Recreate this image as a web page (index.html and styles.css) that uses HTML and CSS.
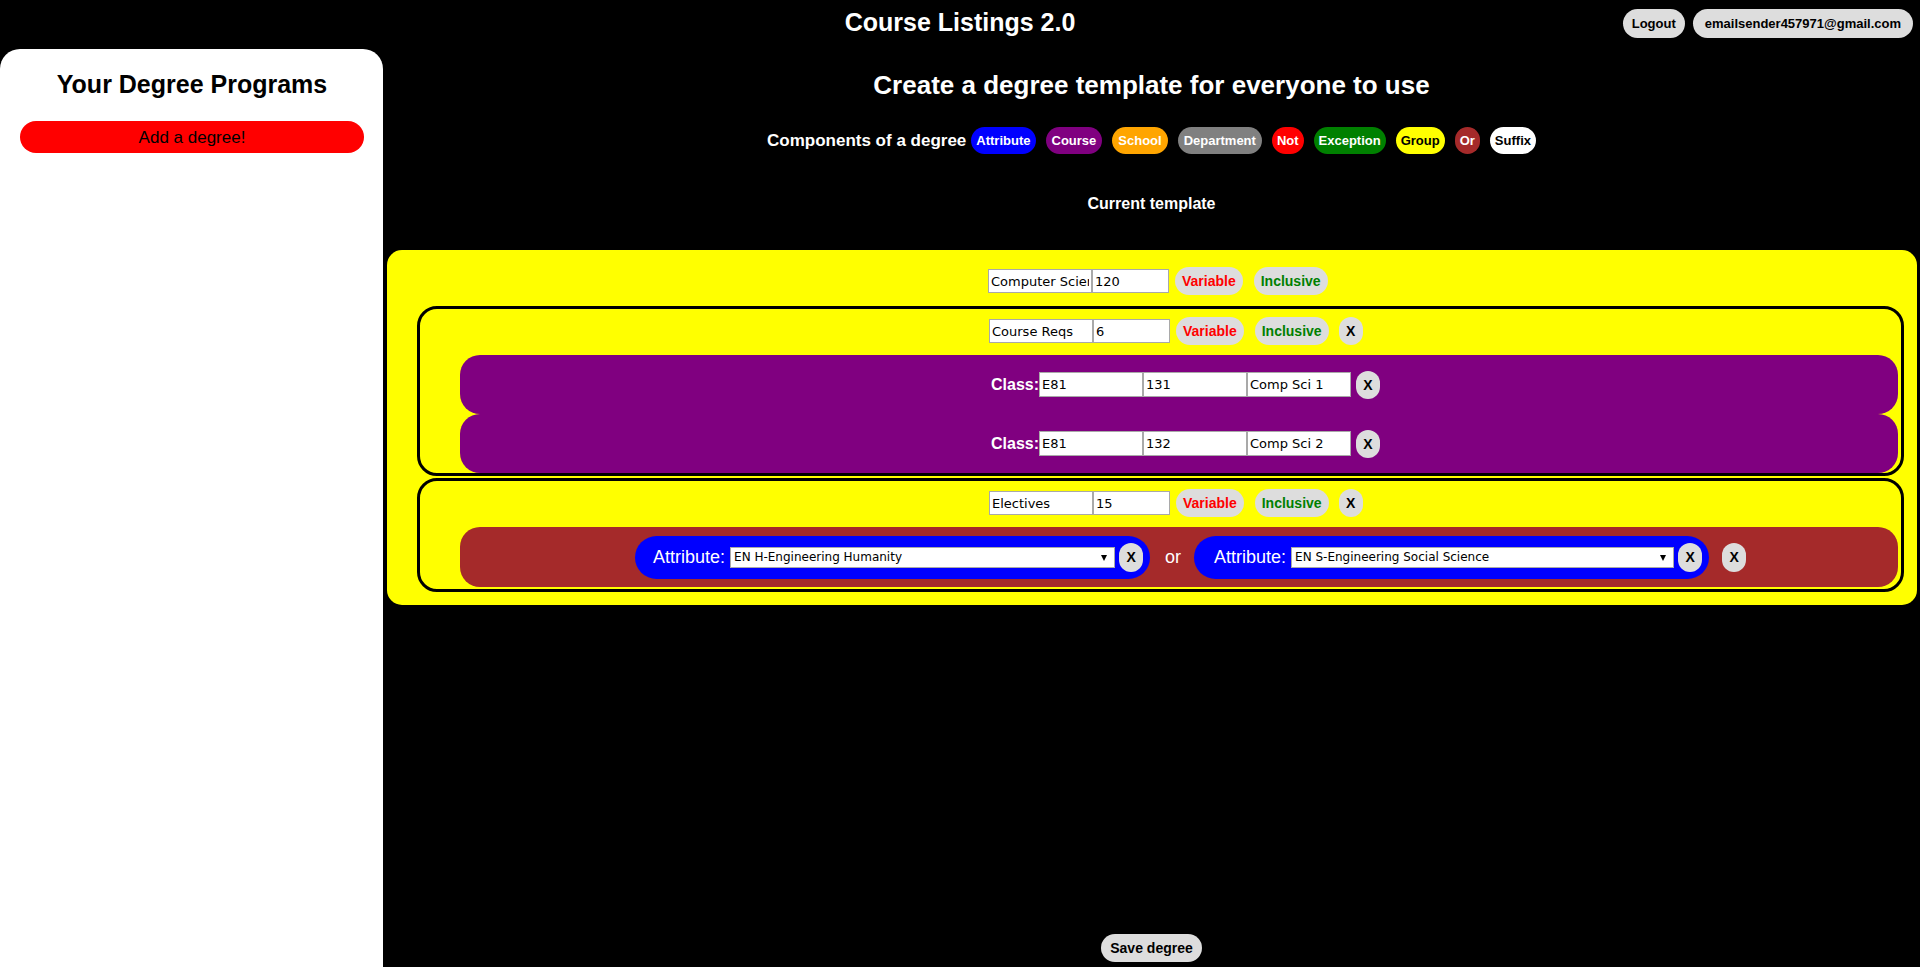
FILE: index.html
```html
<!DOCTYPE html>
<html lang="en">
<head>
<meta charset="utf-8">
<title>Course Listings 2.0</title>
<link rel="stylesheet" href="styles.css">
</head>
<body>
<header class="topbar">
  <div class="topbar-side"></div>
  <h1 class="app-title">Course Listings 2.0</h1>
  <div class="topbar-side topbar-actions">
    <button class="btn-gray btn-head">Logout</button>
    <button class="btn-gray btn-head btn-email">emailsender457971@gmail.com</button>
  </div>
</header>
<div class="layout">
  <aside class="sidebar">
    <h2 class="sidebar-title">Your Degree Programs</h2>
    <button class="add-degree">Add a degree!</button>
  </aside>
  <main class="main">
    <h2 class="main-title">Create a degree template for everyone to use</h2>
    <div class="components">
      <span class="components-label">Components of a degree</span>
      <span class="pill pill-attr">Attribute</span>
      <span class="pill pill-course">Course</span>
      <span class="pill pill-school">School</span>
      <span class="pill pill-dept">Department</span>
      <span class="pill pill-not">Not</span>
      <span class="pill pill-exc">Exception</span>
      <span class="pill pill-group">Group</span>
      <span class="pill pill-or">Or</span>
      <span class="pill pill-suffix">Suffix</span>
    </div>
    <h3 class="current">Current template</h3>
    <section class="template">
      <div class="ctrl-row ctrl-root">
        <input class="field field-name" value="Computer Science">
        <input class="field field-num" value="120">
        <button class="btn-gray toggle toggle-var">Variable</button>
        <button class="btn-gray toggle toggle-inc">Inclusive</button>
      </div>
      <div class="group">
        <div class="ctrl-row ctrl-sub">
          <input class="field field-name" value="Course Reqs">
          <input class="field field-num" value="6">
          <button class="btn-gray toggle toggle-var">Variable</button>
          <button class="btn-gray toggle toggle-inc">Inclusive</button>
          <button class="btn-gray btn-x btn-x-row">X</button>
        </div>
        <div class="course-row">
          <span class="course-label">Class:</span>
          <input class="field field-course" value="E81">
          <input class="field field-course" value="131">
          <input class="field field-course" value="Comp Sci 1">
          <button class="btn-gray btn-x btn-x-course">X</button>
        </div>
        <div class="course-row">
          <span class="course-label">Class:</span>
          <input class="field field-course" value="E81">
          <input class="field field-course" value="132">
          <input class="field field-course" value="Comp Sci 2">
          <button class="btn-gray btn-x btn-x-course">X</button>
        </div>
      </div>
      <div class="group group-last">
        <div class="ctrl-row ctrl-sub">
          <input class="field field-name" value="Electives">
          <input class="field field-num" value="15">
          <button class="btn-gray toggle toggle-var">Variable</button>
          <button class="btn-gray toggle toggle-inc">Inclusive</button>
          <button class="btn-gray btn-x btn-x-row">X</button>
        </div>
        <div class="or-row">
          <div class="attr-pill">
            <span class="attr-label">Attribute:</span>
            <span class="select-wrap select-a">
              <select class="attr-select"><option>EN H-Engineering Humanity</option></select>
            </span>
            <button class="btn-gray btn-x btn-x-attr">X</button>
          </div>
          <span class="or-word">or</span>
          <div class="attr-pill attr-pill-2">
            <span class="attr-label">Attribute:</span>
            <span class="select-wrap select-b">
              <select class="attr-select"><option>EN S-Engineering Social Science</option></select>
            </span>
            <button class="btn-gray btn-x btn-x-attr">X</button>
          </div>
          <button class="btn-gray btn-x btn-x-or">X</button>
        </div>
      </div>
    </section>
    <button class="btn-gray save">Save degree</button>
  </main>
</div>
</body>
</html>
```
FILE: styles.css
```css
* { box-sizing: border-box; }

body {
  margin: 0;
  background: #000;
  font-family: "Liberation Sans", Arial, sans-serif;
  width: 1920px;
  height: 967px;
  overflow: hidden;
}

/* ---------- top bar ---------- */
.topbar {
  display: grid;
  grid-template-columns: 1fr auto 1fr;
  height: 49px;
  align-items: start;
}
.app-title {
  margin: 7px 0 0;
  font-size: 25px;
  line-height: 30px;
  color: #fff;
  font-weight: bold;
}
.topbar-actions {
  display: flex;
  justify-content: flex-end;
  gap: 8px;
  padding: 9px 7px 0 0;
}

.btn-gray {
  background: #ddd;
  border: none;
  border-radius: 15px;
  font-family: "Liberation Sans", Arial, sans-serif;
  font-weight: bold;
  color: #000;
  height: 28px;
  padding: 0 9px;
  font-size: 14px;
  cursor: pointer;
}
.btn-head {
  height: 29px;
  font-size: 13px;
}
.btn-email { padding: 0 12px; }

/* ---------- layout ---------- */
.layout {
  display: flex;
  height: 918px;
}
.sidebar {
  width: 383px;
  flex: none;
  background: #fff;
  border-radius: 20px 20px 0 0;
  padding: 20px 19px 0 20px;
  display: flex;
  flex-direction: column;
}
.sidebar-title {
  margin: 0;
  text-align: center;
  font-size: 25px;
  line-height: 30px;
  font-weight: bold;
  color: #000;
}
.add-degree {
  margin-top: 22px;
  height: 32px;
  border: none;
  border-radius: 16px;
  background: #f00;
  color: #000;
  font-family: "Liberation Sans", Arial, sans-serif;
  font-size: 17px;
  padding-top: 2px;
}

.main {
  flex: 1;
  display: flex;
  flex-direction: column;
}
.main-title {
  margin: 21px 0 0;
  text-align: center;
  color: #fff;
  font-size: 26px;
  line-height: 30px;
  font-weight: bold;
}

/* ---------- components legend ---------- */
.components {
  margin-top: 27px;
  display: flex;
  justify-content: center;
  align-items: center;
  height: 27px;
  gap: 10px;
}
.components-label {
  color: #fff;
  font-weight: bold;
  font-size: 17px;
  margin-right: -5px;
}
.pill {
  height: 27px;
  line-height: 27px;
  border-radius: 14px;
  padding: 0 5px;
  font-size: 13px;
  font-weight: bold;
  color: #fff;
}
.pill-attr { background: #00f; }
.pill-course { background: #800080; padding: 0 6px; }
.pill-school { background: #ffa500; padding: 0 6px; }
.pill-dept { background: #808080; padding: 0 6px; }
.pill-not { background: #f00; }
.pill-exc { background: #008000; }
.pill-group { background: #ff0; color: #000; }
.pill-or { background: #a52a2a; }
.pill-suffix { background: #fff; color: #000; }

.current {
  margin: 40px 0 0;
  text-align: center;
  color: #fff;
  font-size: 16px;
  line-height: 20px;
  font-weight: bold;
}

/* ---------- template tree ---------- */
.template {
  margin: 36px 3px 0 4px;
  background: #ff0;
  border-radius: 15px;
  padding: 17px 13px 13px 30px;
}

.ctrl-row {
  display: flex;
  align-items: center;
  height: 28px;
}
.ctrl-root { padding-left: 571px; }

.field {
  border: 1px solid #a9a9a9;
  background: #fff;
  color: #000;
  height: 24px;
  padding: 0 2px;
  font-family: "DejaVu Sans", sans-serif;
  font-size: 13px;
  margin: 0;
}
.field-name { width: 104px; }
.field-num { width: 77px; }
.field-course { width: 104px; height: 25px; }

.toggle { padding: 0 7px; }
.toggle-var { color: #f00; margin-left: 6px; }
.toggle-inc { color: #008000; margin-left: 11px; }

.btn-x { padding: 0 7px; width: 24px; }
.btn-x-row { margin-left: 10px; }
.btn-x-course { margin-left: 5px; }
.btn-x-attr { margin-left: 4px; height: 29px; }
.btn-x-or { margin-left: 13px; height: 29px; }

.group {
  margin-top: 11px;
  border: 3px solid #000;
  border-radius: 20px;
  padding: 8px 3px 0 40px;
}
.group-last {
  margin-top: 2px;
  padding-bottom: 2px;
}
.group > .ctrl-row { margin-left: -40px; }
.group > .ctrl-sub { padding-left: 569px; }

.course-row {
  display: flex;
  align-items: center;
  height: 59px;
  background: #800080;
  border-radius: 20px;
  padding-left: 531px;
}
.ctrl-row + .course-row { margin-top: 10px; }
.course-label {
  color: #fff;
  font-weight: bold;
  font-size: 16px;
}

.or-row {
  margin-top: 10px;
  display: flex;
  align-items: center;
  height: 60px;
  background: #a52a2a;
  border-radius: 20px;
  padding-left: 175px;
}
.attr-pill {
  display: flex;
  align-items: center;
  height: 43px;
  background: #00f;
  border-radius: 22px;
  padding: 0 7px 0 18px;
}
.attr-pill-2 { padding-left: 20px; }
.attr-label {
  color: #fff;
  font-size: 18px;
  margin-right: 5px;
}
.select-wrap {
  position: relative;
  display: block;
  height: 21px;
}
.select-a { width: 385px; }
.select-b { width: 383px; }
.select-wrap::after {
  content: "";
  position: absolute;
  right: 8px;
  top: 8px;
  border-left: 3px solid transparent;
  border-right: 3px solid transparent;
  border-top: 6px solid #000;
  pointer-events: none;
}
.attr-select {
  -webkit-appearance: none;
  appearance: none;
  width: 100%;
  height: 100%;
  margin: 0;
  border: 1px solid #a9a9a9;
  border-radius: 0;
  background: #fff;
  color: #000;
  padding: 0 3px;
  font-family: "DejaVu Sans", sans-serif;
  font-size: 12px;
}
.or-word {
  color: #fff;
  font-size: 18px;
  margin: 0 13px 0 15px;
}

.save {
  margin: auto auto 5px;
  height: 28px;
}
```
